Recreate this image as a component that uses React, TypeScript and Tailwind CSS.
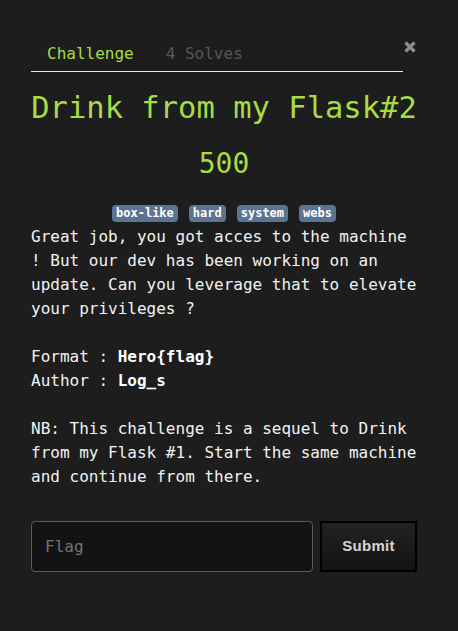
import React from "react";

const mono = { fontFamily: '"DejaVu Sans Mono", monospace' };

function Tag({ label }: { label: string }) {
  return (
    <span className="inline-block rounded-[4px] bg-[#5c7392] px-[4px] text-[12px] font-bold leading-[17px] text-white">
      {label}
    </span>
  );
}

export default function App() {
  return (
    <div
      className="min-h-[631px] w-full bg-[#1d1d1d] px-[31px] pt-[42px] text-[16px] leading-6 text-[#f2f2f2]"
      style={mono}
    >
      <div className="flex w-[386px]">
        <div className="flex flex-1 border-b border-[#e6e6e6]">
          <div className="px-4 pb-[5px] text-[#a6dc46]">Challenge</div>
          <div className="px-4 pb-[5px] text-[#575757]">4 Solves</div>
        </div>
        <div className="w-[14px] pl-[1px] pt-[-1px]">
          <svg width="12" height="12" viewBox="0 0 12 12" className="mt-[-1px]">
            <path d="M1.5 1.5 L10.5 10.5 M10.5 1.5 L1.5 10.5" stroke="#8c8c8c" strokeWidth="3.2" strokeLinecap="butt" />
          </svg>
        </div>
      </div>

      <h1 className="mt-[18px] w-[386px] text-center text-[30.5px] leading-[36px] text-[#a6dc46]">
        Drink from my Flask#2
      </h1>
      <div className="mt-[21px] w-[386px] text-center text-[28px] leading-[33.6px] text-[#a6dc46]">
        500
      </div>

      <div className="mt-[24px] flex w-[386px] justify-center gap-[11px]">
        <Tag label="box-like" />
        <Tag label="hard" />
        <Tag label="system" />
        <Tag label="webs" />
      </div>

      <div className="mt-[3px] w-[386px]">
        <p className="mb-6">
          Great job, you got acces to the machine ! But our dev has been working on an update. Can you leverage that to elevate your privileges ?
        </p>
        <p>
          Format : <b className="font-bold text-white">Hero{"{flag}"}</b>
        </p>
        <p className="mb-6">
          Author : <b className="font-bold text-white">Log_s</b>
        </p>
        <p>
          NB: This challenge is a sequel to Drink from my Flask #1. Start the same machine and continue from there.
        </p>
      </div>

      <div className="mt-[32px] flex w-[386px] gap-[7px]">
        <input
          placeholder="Flag"
          className="h-[51px] flex-1 rounded-[4px] border border-[#5c5c5c] bg-[#131313] px-[13px] text-[16px] text-white outline-none placeholder:text-[#6c757d]"
          style={mono}
        />
        <button
          className="h-[51px] w-[97px] border-2 border-black bg-gradient-to-b from-[#222222] to-[#141414] text-[15px] font-bold tracking-[0.3px] text-[#d4d4d4]"
          style={{ fontFamily: '"Liberation Sans", Arial, sans-serif' }}
        >
          Submit
        </button>
      </div>
    </div>
  );
}
